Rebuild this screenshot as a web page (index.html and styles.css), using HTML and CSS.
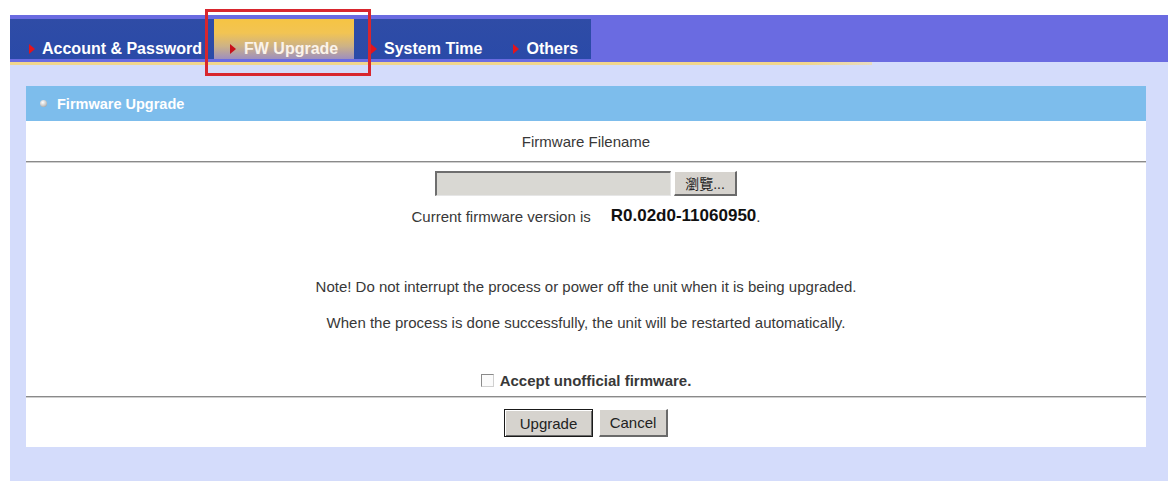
FILE: index.html
```html
<!DOCTYPE html>
<html>
<head>
<meta charset="utf-8">
<link rel="stylesheet" href="styles.css">
</head>
<body>
<div class="frame">
  <div class="tabbar">
    <div class="tabs">
      <div class="tab first"><span class="arrow"></span>Account &amp; Password</div>
      <div class="tab active"><span class="arrow"></span>FW Upgrade</div>
      <div class="tab"><span class="arrow"></span>System Time</div>
      <div class="tab last"><span class="arrow"></span>Others</div>
    </div>
  </div>
  <div class="underline"></div>
  <div class="panel">
    <div class="panel-head"><span class="bullet"></span>Firmware Upgrade</div>
    <div class="panel-body">
      <div class="row title">Firmware Filename</div>
      <div class="divider"></div>
      <div class="row file">
        <div class="file-field"></div>
        <button class="btn browse">瀏覽...</button>
      </div>
      <div class="row version">Current firmware version is <span class="ver">R0.02d0-11060950</span>.</div>
      <div class="row note1">Note! Do not interrupt the process or power off the unit when it is being upgraded.</div>
      <div class="row note2">When the process is done successfully, the unit will be restarted automatically.</div>
      <div class="row accept"><span class="check"></span>Accept unofficial firmware.</div>
      <div class="divider"></div>
      <div class="row actions">
        <button class="btn primary">Upgrade</button>
        <button class="btn">Cancel</button>
      </div>
    </div>
  </div>
</div>
<div class="highlight"></div>
</body>
</html>
```

FILE: styles.css
```css
html, body {
  margin: 0;
  padding: 0;
  background: #ffffff;
  font-family: "Liberation Sans", Arial, sans-serif;
}

.frame {
  margin: 15px 0 0 10px;
  width: 1158px;
  height: 466px;
  background: #d4dcfb;
}

.tabbar {
  height: 47px;
  background: #6a6be1;
  padding-top: 4px;
  box-sizing: border-box;
}

.tabs {
  width: 581px;
  height: 40px;
  background: linear-gradient(#2f4ca6, #2a4aa8);
  display: flex;
  align-items: stretch;
}

.tab {
  display: flex;
  align-items: flex-end;
  padding: 0 14px 0 17px;
  color: #ffffff;
  font-weight: bold;
  font-size: 16px;
  line-height: 20px;
  white-space: nowrap;
}

.tab.first {
  padding-left: 19px;
  padding-right: 12px;
}

.tab.active {
  padding-left: 16px;
  padding-right: 13px;
  width: 140px;
  box-sizing: border-box;
  background: linear-gradient(#f6c443 0%, #f2c453 35%, #cdb286 68%, #9e8fbe 100%);
  color: #fbf3ea;
}

.tab.last {
  padding-right: 0;
}

.arrow {
  width: 0;
  height: 0;
  border-top: 5px solid transparent;
  border-bottom: 5px solid transparent;
  border-left: 6px solid #e3141c;
  margin: 0 7px 5px 0;
  align-self: flex-end;
}

.tab.active .arrow {
  border-left-color: #c8101a;
  margin-right: 8px;
}

.underline {
  width: 862px;
  height: 3px;
  background: linear-gradient(90deg, #f1d68c 0%, #f1d68c 92%, #e8dcc0 100%);
}

.panel {
  margin: 21px 22px 0 16px;
}

.panel-head {
  height: 35px;
  background: #7dbdec;
  display: flex;
  align-items: center;
  padding-left: 14px;
  color: #ffffff;
  font-weight: bold;
  font-size: 14.5px;
}

.bullet {
  width: 7px;
  height: 7px;
  border-radius: 50%;
  background: radial-gradient(circle at 40% 35%, #ffffff 0%, #c8c8c8 55%, #8d8d8d 100%);
  margin-right: 10px;
}

.panel-body {
  background: #ffffff;
  height: 326px;
  box-sizing: border-box;
  padding-bottom: 10px;
  color: #383838;
  font-size: 15px;
}

.row {
  display: flex;
  justify-content: center;
  align-items: center;
  white-space: nowrap;
}

.title {
  height: 40px;
}

.divider {
  height: 1px;
  background: #8a8a8a;
  border-bottom: 1px solid #cfcfcf;
}

.file {
  margin-top: 7px;
  height: 26px;
  gap: 3px;
}

.file-field {
  width: 236px;
  height: 25px;
  box-sizing: border-box;
  background: #d9d8d3;
  border-top: 2px solid #6e6e6e;
  border-left: 2px solid #6e6e6e;
  border-right: 1px solid #e6e6e6;
  border-bottom: 1px solid #e6e6e6;
}

.btn {
  font-family: "Liberation Sans", Arial, "Noto Sans CJK TC", sans-serif;
  font-size: 15px;
  color: #222222;
  background: #d6d3ce;
  border-top: 1px solid #ffffff;
  border-left: 1px solid #ffffff;
  border-right: 2px solid #6a6a6a;
  border-bottom: 2px solid #6a6a6a;
  padding: 0;
  box-sizing: border-box;
  height: 28px;
}

.browse {
  width: 63px;
  height: 25px;
  font-size: 14px;
}

.version {
  margin-top: 10px;
  height: 20px;
}

.ver {
  font-weight: bold;
  font-size: 17px;
  color: #111111;
  margin-left: 20px;
}

.note1 {
  margin-top: 50px;
  height: 20px;
}

.note2 {
  margin-top: 16px;
  height: 20px;
}

.accept {
  margin-top: 38px;
  height: 20px;
  margin-bottom: 6px;
  font-weight: bold;
  gap: 6px;
}

.check {
  width: 13px;
  height: 13px;
  box-sizing: border-box;
  border-top: 1px solid #8a8a8a;
  border-left: 1px solid #8a8a8a;
  border-right: 1px solid #d0d0d0;
  border-bottom: 1px solid #d0d0d0;
  background: #fbfbfb;
}

.actions {
  margin-top: 11px;
  height: 28px;
  gap: 6px;
}

.actions .btn {
  width: 69px;
}

.actions .btn.primary {
  width: 89px;
  border: 1px solid #1a1a1a;
  box-shadow: inset 1px 1px 0 #ffffff, inset -1px -1px 0 #6a6a6a;
}

.highlight {
  position: absolute;
  left: 205px;
  top: 9px;
  width: 166px;
  height: 67px;
  box-sizing: border-box;
  border: 3px solid #d8262e;
}
```
